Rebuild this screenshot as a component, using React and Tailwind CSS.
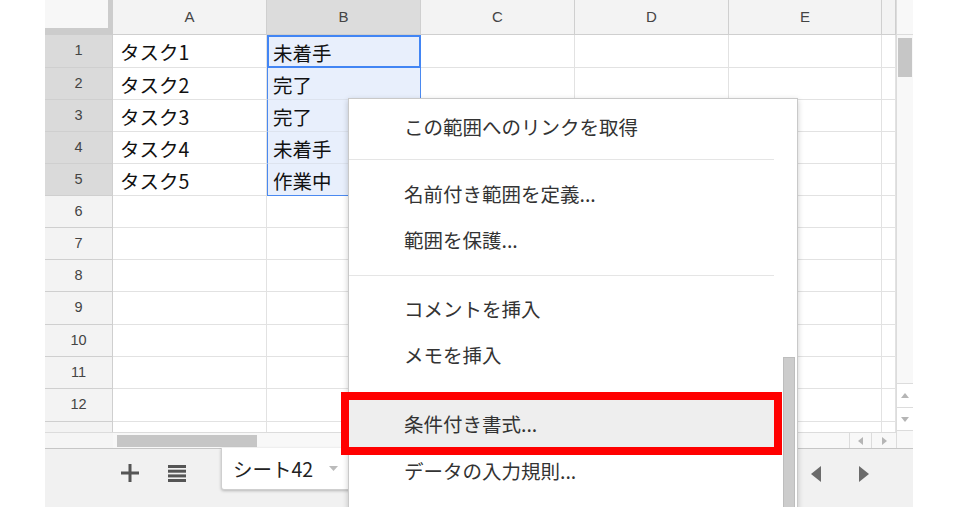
import React from 'react';

const rowHeights = [33, 32, 32, 32, 32, 32, 32, 32, 33, 32, 32, 33];
const cols = ['A', 'B', 'C', 'D', 'E', ''];
const colA = ['タスク1', 'タスク2', 'タスク3', 'タスク4', 'タスク5'];
const colB = ['未着手', '完了', '完了', '未着手', '作業中'];

const jp = { fontFamily: '"Noto Sans CJK JP", "Noto Sans", sans-serif' };
const latin = { fontFamily: '"Liberation Sans", Arial, sans-serif' };

// セルのクラスを組み立てる(B列は選択範囲)
const cellClass = (r, c) => {
    const base = 'flex items-center pt-[2px] text-[19.5px] text-[#111] overflow-hidden whitespace-nowrap';
    if (c === 1 && r === 0) return `${base} pl-[4px] border-2 border-[#4285f4] bg-[#e8effc]`;
    if (c === 1 && r < 4) return `${base} pl-[5px] border-x border-b border-x-[#4a89f0] border-b-[#dde3ee] bg-[#e8effc]`;
    if (c === 1 && r === 4) return `${base} pl-[5px] border-x border-b border-[#4a89f0] bg-[#e8effc]`;
    return `${base} pl-[7px] border-r border-b border-[#e2e2e2] bg-white`;
};

const Grid = () => (
    <div className="grid w-[851px] grid-cols-[68px_154px_154px_154px_154px_153px_14px] grid-rows-[35px_33px_32px_32px_32px_32px_32px_32px_32px_33px_32px_32px_33px_10px]">
        {/* 左上のコーナー */}
        <div className="bg-[#f7f7f7] border-r-[5px] border-b-[7px] border-[#cccccc]" />
        {cols.map((c, i) => (
            <div
                key={c + i}
                style={latin}
                className={`flex items-center justify-center text-[15px] text-[#444] border-r border-b border-[#cfcfcf] ${i === 1 ? 'bg-[#dcdcdc]' : 'bg-[#f3f3f3]'}`}
            >
                {c}
            </div>
        ))}
        {rowHeights.map((h, r) => (
            <React.Fragment key={r}>
                <div
                    style={latin}
                    className={`flex items-center justify-center text-[14.5px] text-[#444] border-r border-b border-[#cfcfcf] ${r < 5 ? 'bg-[#dadada]' : 'bg-[#f3f3f3]'}`}
                >
                    {r + 1}
                </div>
                {cols.map((_, c) => (
                    <div key={c} style={jp} className={cellClass(r, c)}>
                        {c === 0 && colA[r]}
                        {c === 1 && colB[r]}
                    </div>
                ))}
            </React.Fragment>
        ))}
        {/* 13行目(一部のみ表示) */}
        <div className="bg-[#f3f3f3] border-r border-[#cfcfcf]" />
        {cols.map((_, c) => (
            <div key={c} className="bg-white border-r border-[#e2e2e2]" />
        ))}
    </div>
);

const HScroll = () => (
    <div className="flex h-[16px] w-[851px] border-t border-[#dcdcdc] bg-[#f8f8f8]">
        <div className="w-[68px] bg-[#f5f5f5]" />
        <div className="flex-1 flex items-center pl-[4px]">
            <div className="w-[140px] h-[12px] bg-[#c6c6c6]" />
        </div>
        <div className="w-[23px] flex items-center justify-center border-x border-[#dcdcdc]">
            <svg width="5" height="8" viewBox="0 0 5 8"><polygon points="5,0 0,4 5,8" fill="#b5b5b5" /></svg>
        </div>
        <div className="w-[24px] flex items-center justify-center">
            <svg width="5" height="8" viewBox="0 0 5 8"><polygon points="0,0 5,4 0,8" fill="#b5b5b5" /></svg>
        </div>
    </div>
);

const VScroll = () => (
    <div className="flex flex-col w-[17px] h-[448px] bg-[#f8f8f8] border-l border-[#dcdcdc]">
        <div className="h-[35px] border-b border-[#dcdcdc]" />
        <div className="flex-1 pt-[3px] px-[1px]">
            <div className="h-[39px] bg-[#c6c6c6]" />
        </div>
        <div className="h-[24px] flex items-center justify-center border-t border-[#dcdcdc] bg-white">
            <svg width="8" height="5" viewBox="0 0 8 5"><polygon points="0,5 4,0 8,5" fill="#b5b5b5" /></svg>
        </div>
        <div className="h-[23px] flex items-center justify-center border-t border-[#dcdcdc] bg-white">
            <svg width="8" height="5" viewBox="0 0 8 5"><polygon points="0,0 4,5 8,0" fill="#b5b5b5" /></svg>
        </div>
        <div className="h-[18px] border-t border-[#dcdcdc]" />
    </div>
);

const TabBar = () => (
    <div className="flex h-[59px] bg-[#f1f1f1] border-t border-[#c6c6c6]">
        <div className="w-[94px] flex items-start justify-end pt-[15px]">
            <svg width="18" height="18" viewBox="0 0 18 18">
                <rect x="7.5" y="0" width="3" height="18" fill="#555" />
                <rect x="0" y="7.5" width="18" height="3" fill="#555" />
            </svg>
        </div>
        <div className="w-[53px] flex items-start justify-end pr-[6px] pt-[16px]">
            <svg width="18" height="17" viewBox="0 0 18 17">
                <rect x="0" y="0" width="18" height="3" fill="#555" />
                <rect x="0" y="4.7" width="18" height="3" fill="#555" />
                <rect x="0" y="9.4" width="18" height="3" fill="#555" />
                <rect x="0" y="14" width="18" height="3" fill="#555" />
            </svg>
        </div>
        <div className="ml-[29px] -mt-px w-[140px] h-[42px] bg-white border border-t-0 border-[#cfcfcf] rounded-b-[3px] shadow-[0_1px_3px_rgba(0,0,0,0.25)] flex items-center pl-[11px] gap-[16px]">
            <span style={jp} className="text-[19.5px] text-[#222]">シート42</span>
            <svg width="9" height="5" viewBox="0 0 9 5"><polygon points="0,0 9,0 4.5,5" fill="#bbbbbb" /></svg>
        </div>
        <div className="flex-1" />
        <div className="flex items-start pt-[17px] gap-[38px] pr-[44px]">
            <svg width="10" height="16" viewBox="0 0 10 16"><polygon points="10,0 0,8 10,16" fill="#6b6b6b" /></svg>
            <svg width="10" height="16" viewBox="0 0 10 16"><polygon points="0,0 10,8 0,16" fill="#6b6b6b" /></svg>
        </div>
    </div>
);

const MenuItem = ({ label, active, h = 46 }) => (
    <div
        style={{ ...jp, height: h }}
        className={`flex items-center pl-[55px] text-[19.5px] text-[#333] ${active ? 'bg-[#eeeeee]' : ''}`}
    >
        {label}
    </div>
);

const Separator = ({ top, bottom }) => (
    <div style={{ paddingTop: top, paddingBottom: bottom }}>
        <div className="h-px bg-[#e5e5e5]" />
    </div>
);

const ContextMenu = () => (
    <div className="absolute left-[348px] top-[98px] w-[450px] h-[420px] bg-white border border-[#c9c9c9] shadow-[0_2px_6px_rgba(0,0,0,0.2)] flex">
        <div className="w-[425px] flex flex-col pt-[5px]">
            <MenuItem label="この範囲へのリンクを取得" />
            <Separator top={9} bottom={11} />
            <MenuItem label="名前付き範囲を定義..." />
            <MenuItem label="範囲を保護..." />
            <Separator top={12} bottom={10} />
            <MenuItem label="コメントを挿入" />
            <MenuItem label="メモを挿入" />
            <div className="h-[22px]" />
            <MenuItem label="条件付き書式..." active h={47} />
            <MenuItem label="データの入力規則..." h={48} />
        </div>
        <div className="flex flex-col pl-[9px] pt-[258px]">
            <div className="w-[12px] flex-1 bg-[#cccccc] border border-[#bdbdbd]" />
        </div>
    </div>
);

export default function App() {
    return (
        <div className="relative w-[960px] h-[507px] bg-white overflow-hidden flex">
            <div className="w-[45px] shrink-0" />
            <div className="w-[868px] shrink-0 flex flex-col">
                <div className="flex">
                    <div className="flex flex-col">
                        <Grid />
                        <HScroll />
                    </div>
                    <VScroll />
                </div>
                <TabBar />
            </div>
            <ContextMenu />
            {/* 赤枠の注釈 */}
            <div className="absolute left-[341px] top-[392px] w-[441px] h-[63px] border-[8px] border-[#ff0000]" />
        </div>
    );
}
